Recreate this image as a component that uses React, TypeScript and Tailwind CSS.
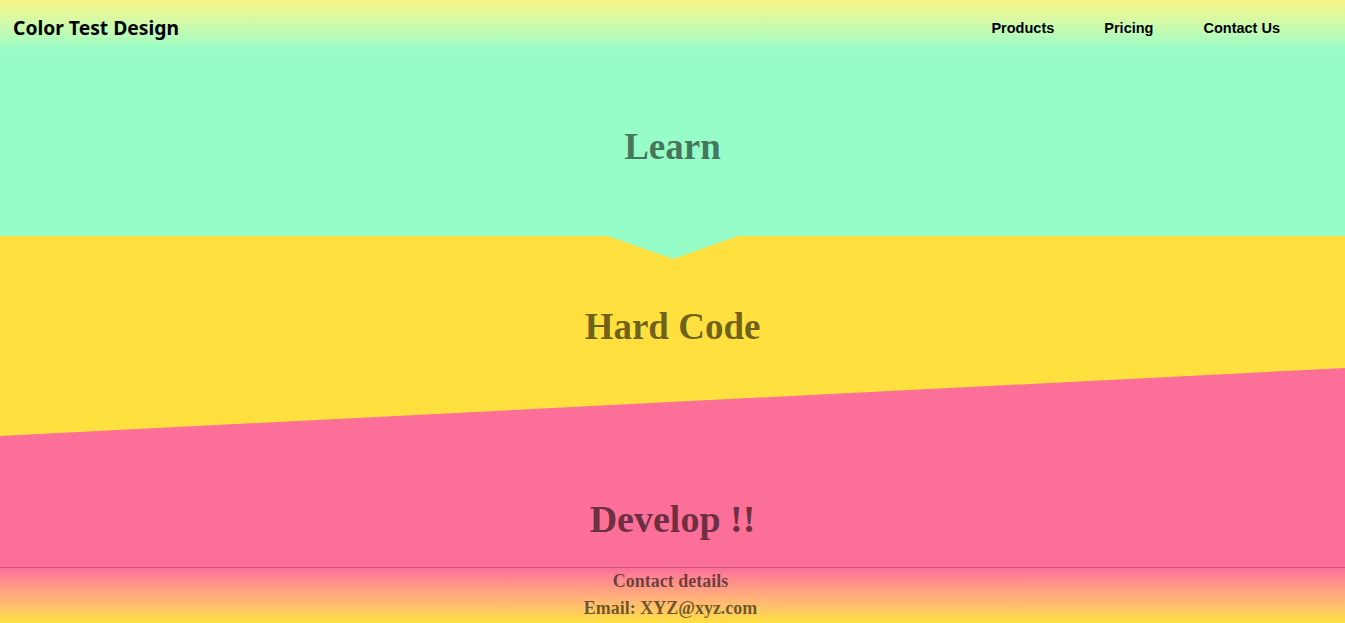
import React from "react";

export default function App() {
  const serif = { fontFamily: '"Liberation Serif", "Times New Roman", serif' };
  return (
    <div className="w-full overflow-hidden">
      <header className="h-[50px] flex items-center justify-between bg-gradient-to-b from-[#faf588] to-[#96fdc8]">
        <div
          className="pl-[13px] pt-[7px] text-[19.3px] font-bold text-black"
          style={{ fontFamily: '"Noto Sans", "Open Sans", sans-serif' }}
        >
          Color Test Design
        </div>
        <nav
          className="flex items-center gap-[50px] pr-[65px] pt-[8px] text-[14.5px] font-bold text-black"
          style={{ fontFamily: '"Liberation Sans", Arial, sans-serif' }}
        >
          <span>Products</span>
          <span>Pricing</span>
          <span>Contact Us</span>
        </nav>
      </header>

      <section className="relative z-10 h-[186px] bg-[#96fdc8] flex justify-center pt-[76px]">
        <h1 className="text-[37px] leading-[42px] font-bold text-black/55 h-[42px]" style={serif}>
          Learn
        </h1>
        <svg
          className="absolute left-1/2 -translate-x-1/2 top-full"
          width="130"
          height="23"
          viewBox="0 0 130 23"
        >
          <polygon points="0,0 65,23 130,0" fill="#96fdc8" />
        </svg>
      </section>

      <section className="h-[200px] bg-[#ffe03f] flex justify-center pt-[70px]">
        <h2 className="text-[37px] leading-[42px] font-bold text-black/58 h-[42px]" style={serif}>
          Hard Code
        </h2>
      </section>

      <section className="relative h-[131px] bg-[#fb6f98] flex justify-center pt-[62px]">
        <svg
          className="absolute left-0 top-[-68px] w-full h-[68px]"
          viewBox="0 0 1345 68"
          preserveAspectRatio="none"
        >
          <polygon points="0,68 1345,0 1345,68" fill="#fb6f98" />
        </svg>
        <h2 className="relative text-[38px] leading-[42px] font-bold text-black/58 h-[42px]" style={serif}>
          Develop !!
        </h2>
      </section>

      <footer
        className="h-[56px] border-t border-[#c9587c] bg-gradient-to-b from-[#fb6f98] to-[#ffe03f] flex flex-col items-center text-[18px] leading-[27px] font-bold text-black/58 pr-[4px]"
        style={serif}
      >
        <div>Contact details</div>
        <div>Email: XYZ@xyz.com</div>
      </footer>
    </div>
  );
}
